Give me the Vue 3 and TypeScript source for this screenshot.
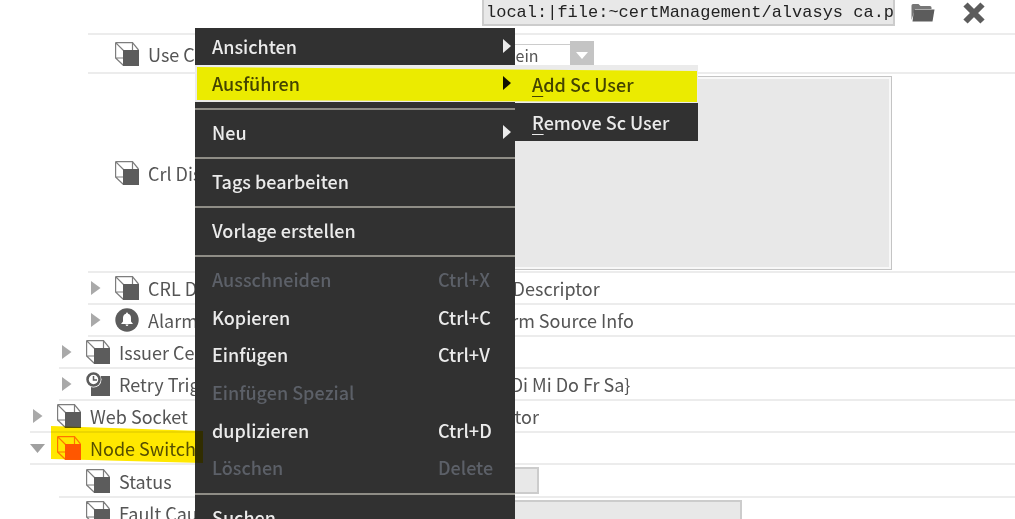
<script setup lang="ts">
import { ref } from 'vue'

type Icon = 'cube' | 'bell' | 'clock'
interface Row {
  label: string
  depth: number
  icon: Icon
  arrow?: 'closed' | 'open'
  value?: string
  field?: 'select' | 'area' | 'short' | 'long'
  active?: boolean
}
interface Entry {
  label: string
  key?: string
  disabled?: boolean
  sub?: boolean
  hot?: boolean
}

const path = ref('local:|file:~certManagement/alvasys ca.pem')
const useCrl = ref('Nein')

const rows: Row[] = [
  { label: 'Use Crl', depth: 2, icon: 'cube', field: 'select' },
  { label: 'Crl Distribution', depth: 2, icon: 'cube', field: 'area' },
  { label: 'CRL Descriptor', depth: 2, icon: 'cube', arrow: 'closed', value: 'Crl Descriptor' },
  { label: 'Alarm Source', depth: 2, icon: 'bell', arrow: 'closed', value: 'Alarm Source Info' },
  { label: 'Issuer Certificate', depth: 1, icon: 'cube', arrow: 'closed' },
  { label: 'Retry Trigger', depth: 1, icon: 'clock', arrow: 'closed', value: 'So Di Mi Do Fr Sa}' },
  { label: 'Web Socket', depth: 0, icon: 'cube', arrow: 'closed', value: 'Vektor' },
  { label: 'Node Switch', depth: 0, icon: 'cube', arrow: 'open', active: true },
  { label: 'Status', depth: 1, icon: 'cube', field: 'short' },
  { label: 'Fault Cause', depth: 1, icon: 'cube', field: 'long' },
]

const groups: Entry[][] = [
  [{ label: 'Ansichten', sub: true }, { label: 'Ausführen', sub: true, hot: true }],
  [{ label: 'Neu', sub: true }],
  [{ label: 'Tags bearbeiten' }],
  [{ label: 'Vorlage erstellen' }],
  [
    { label: 'Ausschneiden', key: 'Ctrl+X', disabled: true },
    { label: 'Kopieren', key: 'Ctrl+C' },
    { label: 'Einfügen', key: 'Ctrl+V' },
    { label: 'Einfügen Spezial', disabled: true },
    { label: 'duplizieren', key: 'Ctrl+D' },
    { label: 'Löschen', key: 'Delete', disabled: true },
  ],
  [{ label: 'Suchen' }],
]
</script>

<template>
  <main class="page">
    <div class="row path-row">
      <input v-model="path" class="path" type="text" aria-label="Path" />
      <button class="tool folder" type="button" aria-label="Open">
        <svg width="24" height="20" viewBox="0 0 24 20">
          <path d="M.5 17V2.500q0-1.500 1.500-1.500h5.500l2 2H19q1.500 0 1.500 1.500V6H4z" fill="#777" />
          <path d="M3 6.500H23.500L21.500 18.500H1.500z" fill="#5c5c5c" />
        </svg>
      </button>
      <button class="tool" type="button" aria-label="Remove">
        <svg width="24" height="24" viewBox="0 0 24 24">
          <path d="M3.500 3.500L20.500 20.500M20.500 3.500L3.500 20.500" stroke="#5c5c5c" stroke-width="6" />
        </svg>
      </button>
    </div>

    <div v-for="(r, i) in rows" :key="i" class="row" :class="['depth-' + r.depth, r.field]">
      <div class="name">
        <span class="twist">
          <svg v-if="r.arrow === 'closed'" width="10" height="14" viewBox="0 0 10 14"><path d="M0 0L9.500 7L0 14z" fill="#a9a9a9" /></svg>
          <svg v-else-if="r.arrow === 'open'" class="open" width="15" height="9" viewBox="0 0 15 9"><path d="M0 0H15L7.500 9z" fill="#a0a0a0" /></svg>
        </span>
        <svg v-if="r.icon === 'cube'" class="icon" :class="{ active: r.active }" width="24" height="24" viewBox="0 0 24 24">
          <path d="M.6 .6H17.500V8M.6 .6V16H8M.6 .6L8.500 8.500M17.500 .6L23.500 8M.6 16L8.500 23.500" fill="none" stroke="currentColor" stroke-width="1.200" opacity=".8" />
          <path d="M8 8H24V24H8z" fill="currentColor" />
        </svg>
        <svg v-else-if="r.icon === 'bell'" class="icon" width="24" height="24" viewBox="0 0 24 24">
          <circle cx="12" cy="12" r="11.700" fill="currentColor" />
          <path d="M12 4.500q1 0 1 1.200q3 .8 3 4.300v3.500l2 2.500H6l2-2.500V10q0-3.500 3-4.300q0-1.200 1-1.200zM10.500 16.500h3q-.3 1.500-1.500 1.500t-1.500-1.500z" fill="#fff" />
        </svg>
        <svg v-else class="icon" width="24" height="24" viewBox="0 0 24 24">
          <path d="M13 4H24V24H5V13z" fill="currentColor" />
          <circle cx="7.500" cy="7.500" r="8" fill="#fff" />
          <circle cx="7.500" cy="7.500" r="6" fill="#fff" stroke="#5c5c5c" stroke-width="2.500" />
          <path d="M7.500 4V8H11" fill="none" stroke="#5c5c5c" stroke-width="1.500" />
        </svg>
        <span>{{ r.label }}</span>
      </div>
      <div class="value">
        <span v-if="r.value" class="text">{{ r.value }}</span>
        <div v-else-if="r.field === 'select'" class="pick">
          <select v-model="useCrl" :aria-label="r.label">
            <option>Nein</option>
            <option>Ja</option>
          </select>
          <span class="pick-arrow"><svg width="12" height="7" viewBox="0 0 12 7"><path d="M0 0H12L6 7z" fill="#fff" /></svg></span>
        </div>
        <textarea v-else-if="r.field === 'area'" class="box" :aria-label="r.label" readonly></textarea>
        <input v-else-if="r.field" class="box" type="text" :aria-label="r.label" readonly />
      </div>
    </div>

    <nav class="menu" aria-label="Kontextmenü">
      <div v-for="(g, gi) in groups" :key="gi" class="group" :class="{ edit: g.length > 2 }">
        <div v-for="e in g" :key="e.label" class="slot">
          <button class="item" :class="{ hot: e.hot }" type="button" :disabled="e.disabled">
            <span>{{ e.label }}</span>
            <span v-if="e.key" class="key">{{ e.key }}</span>
            <svg v-if="e.sub" class="more" width="8" height="14" viewBox="0 0 8 14"><path d="M0 0L8 7L0 14z" fill="currentColor" /></svg>
          </button>
          <div v-if="e.hot" class="submenu">
            <button class="item hot" type="button"><span><u>A</u>dd Sc User</span></button>
            <button class="item" type="button"><span><u>R</u>emove Sc User</span></button>
          </div>
        </div>
      </div>
    </nav>

    <svg class="marker marker-run" width="500" height="36" viewBox="0 0 500 36" aria-hidden="true">
      <path d="M0 0L500 4V35L0 33z" fill="#ff0" />
    </svg>
    <svg class="marker marker-node" width="152" height="38" viewBox="0 0 152 38" aria-hidden="true">
      <path d="M0 0L152 5V37L0 33z" fill="#ffe800" />
    </svg>
  </main>
</template>

<style>
body {
  margin: 0;
  background: #fff;
}
</style>

<style scoped>
* {
  box-sizing: border-box;
}
.page {
  position: relative;
  height: 100vh;
  overflow: hidden;
  background: #fff;
  color: #555;
  font: 18px/26px "Noto Sans CJK SC", "Noto Sans", sans-serif;
}
button,
input,
select,
textarea {
  margin: 0;
  border-radius: 0;
  font: inherit;
  color: inherit;
}
svg {
  display: block;
  flex: none;
}
.row {
  display: flex;
  align-items: center;
  height: 32px;
  border-bottom: 2px solid #ececec;
  white-space: nowrap;
}
.depth-0 { margin-left: 30px; --indent: 30px; }
.depth-1 { margin-left: 59px; --indent: 59px; }
.depth-2 { margin-left: 88px; --indent: 88px; }
.path-row {
  height: 35px;
  margin-left: 88px;
  padding-left: 394px;
  align-items: flex-start;
}
.path {
  width: 413px;
  height: 26px;
  padding: 0 0 0 2px;
  border: 2px solid #ccc;
  border-top: 0;
  background: #e8e8e8;
  color: #222;
  font: 17px/24px "Liberation Mono", monospace;
}
.tool {
  margin: 1px 0 0 27px;
  padding: 0;
  border: 0;
  background: none;
}
.tool.folder {
  margin: 3px 0 0 16px;
}
.name {
  display: flex;
  align-items: center;
  flex: none;
  width: calc(482px - var(--indent));
}
.twist {
  flex: none;
  width: 27px;
  padding-left: 3px;
}
.twist .open {
  margin-left: -3px;
}
.icon {
  margin-right: 9px;
  color: #5c5c5c;
}
.icon.active {
  color: #ff6000;
}
.text {
  padding-left: 3px;
}
.select { height: 39px; }
.area { height: 199px; }
.short { height: 33px; }
.pick {
  position: relative;
  width: 112px;
  height: 26px;
}
.pick select {
  appearance: none;
  width: 100%;
  height: 100%;
  padding: 0 24px 4px 21px;
  border: 1px solid #ccc;
  background: #fff;
  font-size: 16px;
  line-height: 20px;
}
.pick-arrow {
  position: absolute;
  top: 0;
  right: 0;
  display: grid;
  place-items: center;
  width: 24px;
  height: 26px;
  padding-top: 4px;
  background: #c4c4c4;
  pointer-events: none;
}
.box {
  display: block;
  height: 27px;
  border: 2px solid #ccc;
  background: #e8e8e8;
  resize: none;
}
textarea.box {
  width: 410px;
  height: 194px;
  border: 1px solid #c4c4c4;
  outline: 2px solid #f8f8f8;
  outline-offset: -3px;
}
.short .box { width: 57px; }
.long .box { width: 260px; }
.menu {
  position: absolute;
  top: 28px;
  left: 195px;
  width: 320px;
  background: #313131;
}
.group + .group {
  padding-top: 12px;
  background: linear-gradient(#8f8d86, #8f8d86) 0 6px / 100% 2px no-repeat;
}
.edit {
  display: flex;
  flex-direction: column;
  height: 238px;
}
.edit .slot {
  flex: 1;
}
.slot {
  position: relative;
}
.item {
  display: flex;
  align-items: center;
  width: 100%;
  height: 37px;
  padding: 0 4px 1px 17px;
  border: 0;
  background: #313131;
  color: #ebebeb;
  font-weight: 500;
  text-align: left;
  white-space: nowrap;
}
.item:disabled {
  color: #5c6068;
}
.item.hot {
  background: #ebebeb;
  color: #444;
}
.item.hot .more {
  color: #111;
}
.item u {
  text-underline-offset: 4px;
  text-decoration-thickness: 1px;
}
.key {
  width: 73px;
  margin-left: auto;
}
.more {
  margin-left: auto;
}
.submenu {
  position: absolute;
  top: 0;
  left: 100%;
  width: 183px;
  background: #313131;
}
.submenu .item {
  height: 38px;
}
.marker {
  position: absolute;
  mix-blend-mode: multiply;
  pointer-events: none;
}
.marker-run {
  top: 67px;
  left: 197px;
}
.marker-node {
  top: 426px;
  left: 51px;
}
</style>
